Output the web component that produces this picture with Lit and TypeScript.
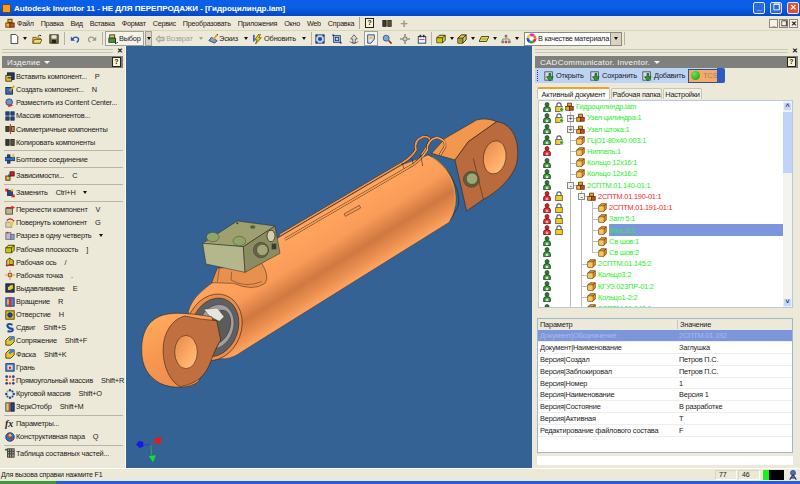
import { LitElement, html, css, svg } from "lit";
import { customElement } from "lit/decorators.js";

const r = (x: number, y: number, w: number, h: number, f: string, s = "none") =>
  svg`<rect x=${x} y=${y} width=${w} height=${h} fill=${f} stroke=${s} stroke-width="1"/>`;
const c = (x: number, y: number, rad: number, f: string, s = "none") =>
  svg`<circle cx=${x} cy=${y} r=${rad} fill=${f} stroke=${s} stroke-width=".8"/>`;
const p = (d: string, f: string, s = "none", w = 1) =>
  svg`<path d=${d} fill=${f} stroke=${s} stroke-width=${w}/>`;

const DK = "#23304a";
const icons: Record<string, any> = {
  asm: svg`${r(3.5, 1.5, 5, 4, "#e8a828", "#5a2c00")}${r(1, 6, 5, 5, "#f0b030", "#5a2c00")}${r(6, 6, 5, 5, "#c8482a", "#5a2c00")}`,
  part: svg`${p("M1 4 L4 1 H11 V8 L8 11 H1 Z", "#e0a030", "#6a3a08")}${p("M1 4 H8 V11 M8 4 L11 1", "none", "#6a3a08")}${r(1.5, 4.5, 6, 6, "#f4c860")}`,
  person: svg`${c(6, 3, 2.4, "#2c7a2c", "#183a18")}${p("M2 11.5 V8 Q2 5.5 6 5.5 Q10 5.5 10 8 V11.5 Z", "#3d9a3d", "#183a18")}${r(4.5, 8, 3, 3, "#c9e8c9")}`,
  personr: svg`${c(6, 3, 2.4, "#d02020", "#601010")}${p("M2 11.5 V8 Q2 5.5 6 5.5 Q10 5.5 10 8 V11.5 Z", "#e03030", "#601010")}${r(4.5, 8, 3, 3, "#f4b0b0")}`,
  lock: svg`${p("M3.5 6 V3.5 Q3.5 1 6 1 Q8.5 1 8.5 3.5 V6", "none", "#4a5a90", 1.4)}${r(2, 5.5, 8, 6, "#f2cc1e", "#6a6030")}`,
  lockc: svg`${p("M3.5 6 V3.5 Q3.5 1 6 1 Q8.5 1 8.5 3.5 V6", "none", "#4a5a90", 1.4)}${r(2, 5.5, 8, 6, "#f2cc1e", "#6a6030")}${c(9, 9, 2.4, "#2aa82a", "#fff")}`,
  new: svg`${p("M2.5 .5 H8 L10.5 3 V11.5 H2.5 Z", "#fff", "#222")}`,
  open: svg`${p("M1 4 H5 L6 5 H10 V11 H1 Z", "#e8c040", "#6a5010")}${p("M1 11 L3 6.5 H12 L10 11 Z", "#f4dc78", "#6a5010")}${p("M7 3 Q9 .5 11 2", "none", "#222", 1.2)}`,
  save: svg`${r(1, 1, 10, 10, "#7a7a3a", "#222")}${r(3, 1.5, 6, 4, "#e8e8e0")}${r(3.5, 7, 5, 4, "#222")}`,
  undo: svg`${p("M3 6 Q6 2 10 5 Q11 8 8 10", "none", "#2a50b0", 1.6)}${p("M1 3 V8 H6 Z", "#2a50b0")}`,
  redo: svg`${p("M9 6 Q6 2 2 5 Q1 8 4 10", "none", "#9a9a90", 1.4)}${p("M11 3 V8 H6 Z", "#9a9a90")}`,
  select: svg`${r(2, 1, 6, 4, "#e0c040", "#333")}${r(1, 5, 8, 5, "#3a9a3a", "#333")}${p("M9 6 L9 12 L11 10 L13 11", "none", "#222")}`,
  back: svg`${p("M1 6 L5 2 V4 H11 V8 H5 V10 Z", "#d0cec0", "#9a988c")}`,
  sketch: svg`${p("M1 8 L4 4 L11 8 L8 11 Z", "#6a9ad8", "#2a4a90")}${p("M5 8 L11 1", "none", "#d8a020", 2)}${p("M11 1 L12 0", "none", "#c02020", 2)}`,
  update: svg`${p("M7 0 L2 7 H5 L3 12 L10 4.5 H7 L9 0 Z", "#e8d020", "#6a5a10")}${r(0, 1, 2, 8, "#3060c0")}`,
  zall: svg`${r(1, 1, 10, 10, "#c8d8ec", "#1a3a70")}${c(6, 6, 2.5, "#1a4a98")}${c(2, 2, 1.2, "#1a3a70")}${c(10, 2, 1.2, "#1a3a70")}${c(2, 10, 1.2, "#1a3a70")}${c(10, 10, 1.2, "#1a3a70")}`,
  zwin: svg`${r(2, 2, 8, 8, "#b8cce4", "#1a3a70")}${r(4, 4, 4, 4, "none", "#1a3a70")}${r(0.5, 0.5, 2, 2, "#1a3a70")}${r(9.5, 9.5, 2, 2, "#1a3a70")}`,
  zup: svg`${p("M6 1 L10 6 H7.5 V11 H4.5 V6 H2 Z", "#e4e2d6", "#555")}${p("M1 9 Q6 13 11 9", "none", "#555")}`,
  pan: svg`${p("M2 1 H10 V6 L6 11 H2 Z", "#d8e4f4", "#1a3a70")}${r(4, 3, 4, 3, "#f0c040")}`,
  zoom: svg`${c(5, 5, 3.6, "#7ca8e0", "#1a3a70")}${p("M8 8 L11.5 11.5", "none", "#a03020", 2)}`,
  orbit: svg`${c(6, 6, 2.6, "#cfcdbf", "#444")}${p("M6 0 V3 M6 9 V12 M0 6 H3 M9 6 H12", "none", "#444")}`,
  look: svg`${r(1.5, 3, 9, 8, "#eef2fa", "#1a2a60")}${r(3, 1, 2, 3, "#1a2a60")}${r(7, 1, 2, 3, "#1a2a60")}${r(3, 6, 6, 1, "#d03030")}`,
  box1: svg`${p("M1 4.5 L4 1.5 H11 V7.5 L8 10.5 H1 Z", "#e4e020", "#222")}${r(1.5, 5, 6, 5, "#c8c800")}${p("M1 4.5 H8 V10.5 M8 4.5 L11 1.5", "none", "#222")}`,
  box2: svg`${p("M1 5 L5 1 H11 V7 L7 11 H1 Z", "#d8c850", "#222")}${r(1.5, 5.5, 5, 5, "#a8a020")}${p("M1 5 H7 V11 M7 5 L11 1", "none", "#222")}`,
  plane: svg`${p("M3 3 H12 L9 9 H0 Z", "#e4dc30", "#333")}${p("M3 6 H9", "none", "#888")}`,
  tree: svg`${r(4.5, 1, 3, 3, "#777")}${r(0.5, 8, 3, 3, "#777")}${r(4.5, 8, 3, 3, "#d04020")}${r(8.5, 8, 3, 3, "#777")}${p("M6 4 V6 M2 8 V6 H10 V8", "none", "#777")}`,
  ins: svg`${r(3, 1, 8, 8, "#1a3a80", "#101830")}${r(1, 4, 7, 7, "#e8c030", "#403000")}${p("M3 7 H9", "none", "#103070", 1.4)}`,
  create: svg`${r(1, 3, 8, 8, "#2a70d0", "#102040")}${p("M5 8 L11 1", "none", "#d8a020", 2)}${p("M4.5 9 L6 7.5", "none", "#c02020", 1.6)}`,
  place: svg`${c(5, 5, 4, "#7090c8", "#203050")}${p("M4 7 L10 9 L4 11 Z", "#d03030")}`,
  arr: svg`${r(1, 1, 4, 4, "#1a4a98", DK)}${r(7, 1, 4, 4, "#1a4a98", DK)}${r(1, 7, 4, 4, "#1a4a98", DK)}${r(7, 7, 4, 4, "#1a4a98", DK)}`,
  mir: svg`${r(1, 3, 4, 6, "#444a30", "#222")}${r(8, 3, 3, 6, "#c8a030", "#222")}${p("M6.5 0 V12", "none", "#d02020", 1.2)}`,
  cp: svg`${r(1, 3, 4, 7, "#3a3a30", "#222")}${r(7, 3, 4, 7, "#5a5a30", "#222")}`,
  bolt: svg`${r(3, 1, 3, 10, "#1a4a98", DK)}${r(0, 4, 12, 4, "#2a70d0", DK)}${r(9, 0, 2, 4, "#e0c030")}`,
  con: svg`${r(1, 6, 5, 5, "#e8c030", "#402000")}${r(6, 1, 5, 5, "#d02020", "#501010")}${r(4, 4, 3, 3, "#1a4a98")}`,
  rep: svg`${r(3, 3, 6, 6, "#1a4a98", DK)}${p("M0 1 L5 1 L1 5 Z", "#e02020")}${p("M12 11 L7 11 L11 7 Z", "#e02020")}${r(7, 1, 3, 3, "#e8c030")}`,
  mov: svg`${r(1, 4, 8, 7, "#b8b88c", "#444")}${p("M1 2.5 H8 V0.5 L12 3 L8 5.5 V3.5 H1 Z", "#e02020")}`,
  rot: svg`${r(1, 5, 7, 6, "#d8d4b0", "#888")}${c(8, 7, 2.5, "#e8d030")}${p("M2 3 Q7 -1 11 4", "none", "#e02020", 1.6)}`,
  sec: svg`${r(1, 2, 6, 8, "#c0b8d0", "#667")}${r(7, 4, 4, 6, "#88a0c8", "#667")}${r(2, 1, 2, 2, "#c03030")}`,
  axis: svg`${p("M2 4 L6 1 V9 L2 11 Z", "#e4cc20", "#333")}${p("M1 10 H11", "none", "#c02020", 1.4)}${p("M6 2 L10 4 V9 L6 9", "#d8b818", "#333")}`,
  pt: svg`${p("M6 0 V12 M0 6 H12", "none", "#e09040", 1.2)}${r(4, 4, 4, 4, "#e8b060", "#a05020")}`,
  ext: svg`${r(1, 1, 10, 10, "#1a3a90", "#101830")}${p("M3 5 L7 2 H10 V7 L6 9 H3 Z", "#e8d030", "#403000")}`,
  rev: svg`${r(1, 1, 10, 10, "#5080d0", "#203060")}${r(4.5, 0, 3, 12, "#d03030")}${r(2.5, 3, 2, 6, "#e0c050")}`,
  hole: svg`${r(1, 1, 10, 10, "#e0c020", "#403000")}${c(6, 6, 2.8, "#1a4a98", "#101830")}`,
  swp: svg`${p("M9 2 Q2 0 3 4 Q5 7 9 7 Q11 11 3 10", "none", "#1a4aa8", 2.4)}`,
  fil: svg`${p("M1 5 L5 1 H11 V7 L7 11 H1 Z", "#e8c828", "#403000")}${p("M5 5 L11 1", "none", "#3a80e0", 3)}`,
  face: svg`${r(1, 2, 10, 9, "#4a90e0", "#103060")}${r(3, 4, 6, 5, "#f0e8d0")}${c(6, 7, 1.5, "#e02020")}`,
  rec: svg`${c(2, 2, 1.6, "#1a4a98")}${c(10, 2, 1.6, "#1a4a98")}${c(2, 10, 1.6, "#1a4a98")}${c(10, 10, 1.6, "#1a4a98")}${c(2, 6, 1.4, "#d04020")}${c(10, 6, 1.4, "#d04020")}${c(6, 2, 1.4, "#d04020")}${c(6, 10, 1.4, "#d04020")}`,
  cir: svg`${c(6, 1.5, 1.5, "#1a4a98")}${c(6, 10.5, 1.5, "#1a4a98")}${c(1.5, 6, 1.5, "#1a4a98")}${c(10.5, 6, 1.5, "#1a4a98")}${c(3, 3, 1.3, "#e0a030")}${c(9, 3, 1.3, "#1a4a98")}${c(3, 9, 1.3, "#1a4a98")}${c(9, 9, 1.3, "#1a4a98")}`,
  mirf: svg`${r(1, 1, 4, 10, "#e8d030", "#1a3a90")}${r(7, 1, 4, 10, "#1a4a98", "#101830")}${p("M6 0 V12", "none", "#e02020", 1.2)}`,
  imate: svg`${c(6, 6, 5.2, "#2a70d0", "#102040")}${p("M3 3 L9 9", "none", "#e02020", 2.2)}${c(6, 4, 1.8, "#e8c030")}`,
  tab: svg`${r(3, 1, 8, 10, "#a8a890", "#333")}${p("M5.5 1 V11 M8 1 V11 M3 4 H11 M3 7 H11", "none", "#333")}${r(0, 1, 3, 2, "#2a6a2a")}`,
  dn: svg`${r(1, 1, 9, 10, "#d8dce4", "#404860")}${p("M6 3 V7 H3 L7 12 L11 7 H8 V3 Z", "#30a030", "#106010")}`,
  wheel: svg`<circle cx="6" cy="6" r="4" fill="none" stroke="#e03030" stroke-width="3" stroke-dasharray="4.2 25"/><circle cx="6" cy="6" r="4" fill="none" stroke="#20b040" stroke-width="3" stroke-dasharray="4.2 25" stroke-dashoffset="-4.2"/><circle cx="6" cy="6" r="4" fill="none" stroke="#2050e0" stroke-width="3" stroke-dasharray="4.2 25" stroke-dashoffset="-8.4"/><circle cx="6" cy="6" r="4" fill="none" stroke="#f0d020" stroke-width="3" stroke-dasharray="4.2 25" stroke-dashoffset="-12.6"/><circle cx="6" cy="6" r="4" fill="none" stroke="#e020e0" stroke-width="3" stroke-dasharray="4.2 25" stroke-dashoffset="-16.8"/><circle cx="6" cy="6" r="4" fill="none" stroke="#f08020" stroke-width="3" stroke-dasharray="4.2 25" stroke-dashoffset="-21"/>`,
  net: svg`${c(6, 3.5, 3, "#4a70c8", "#1c3070")}${p("M2 11.5 L6 6 L10 11.5 M3 9.5 H9", "none", "#1c3070", 1.5)}`,
};
const ic = (n: string, cls = "ic") => html`<svg class=${cls} viewBox="0 0 12 12">${icons[n]}</svg>`;

const menu = ["Файл", "Правка", "Вид", "Вставка", "Формат", "Сервис", "Преобразовать", "Приложения", "Окно", "Web", "Справка"];

type TB = { i?: string; t?: string; w: number; k?: string };
const tools: TB[] = [
  { w: 7 }, { i: "new", w: 13 }, { k: "arrow", w: 10 }, { i: "open", w: 14 }, { i: "save", w: 20 }, { k: "sep", w: 1 },
  { i: "undo", w: 20 }, { i: "redo", w: 14 }, { k: "sep", w: 6 },
  { i: "select", t: "Выбор", w: 39, k: "press" }, { w: 1 }, { k: "drop", w: 7 }, { w: 3 },
  { i: "back", t: "Возврат", w: 38, k: "off" }, { k: "arrowoff", w: 15 },
  { i: "sketch", t: "Эскиз", w: 30 }, { k: "arrow", w: 15 },
  { i: "update", t: "Обновить", w: 43 }, { k: "arrow", w: 15 }, { k: "sep", w: 1 },
  { i: "zall", w: 16 }, { i: "zwin", w: 18 }, { i: "zup", w: 16 }, { w: 2 }, { i: "pan", w: 14, k: "pressi" }, { i: "zoom", w: 18 },
  { i: "orbit", w: 18 }, { i: "look", w: 16 }, { k: "sep", w: 3 },
  { i: "box1", w: 16 }, { k: "arrow", w: 6 }, { i: "box2", w: 14 }, { k: "arrow", w: 7 }, { i: "plane", w: 15 }, { k: "arrow", w: 7 }, { i: "tree", w: 16 }, { k: "arrow", w: 6 },
];

type Cmd = { i?: string; t?: string; key?: string; more?: boolean; sep?: boolean; fx?: boolean };
const cmds: Cmd[] = [
  { i: "ins", t: "Вставить компонент...", key: "P" },
  { i: "create", t: "Создать компонент...", key: "N" },
  { i: "place", t: "Разместить из Content Center..." },
  { i: "arr", t: "Массив компонентов..." },
  { i: "mir", t: "Симметричные компоненты" },
  { i: "cp", t: "Копировать компоненты" },
  { sep: true },
  { i: "bolt", t: "Болтовое соединение" },
  { sep: true },
  { i: "con", t: "Зависимости...", key: "C" },
  { sep: true },
  { i: "rep", t: "Заменить", key: "Ctrl+H", more: true },
  { sep: true },
  { i: "mov", t: "Перенести компонент", key: "V" },
  { i: "rot", t: "Повернуть компонент", key: "G" },
  { i: "sec", t: "Разрез в одну четверть", more: true },
  { i: "box1", t: "Рабочая плоскость", key: "]" },
  { i: "axis", t: "Рабочая ось", key: "/" },
  { i: "pt", t: "Рабочая точка", key: "." },
  { i: "ext", t: "Выдавливание", key: "E" },
  { i: "rev", t: "Вращение", key: "R" },
  { i: "hole", t: "Отверстие", key: "H" },
  { i: "swp", t: "Сдвиг", key: "Shift+S" },
  { i: "fil", t: "Сопряжение", key: "Shift+F" },
  { i: "fil", t: "Фаска", key: "Shift+K" },
  { i: "face", t: "Грань" },
  { i: "rec", t: "Прямоугольный массив", key: "Shift+R" },
  { i: "cir", t: "Круговой массив", key: "Shift+O" },
  { i: "mirf", t: "ЗеркОтобр", key: "Shift+M" },
  { sep: true },
  { fx: true, t: "Параметры..." },
  { i: "imate", t: "Конструктивная пара", key: "Q" },
  { sep: true },
  { i: "tab", t: "Таблица составных частей..." },
];

type Node = { n: string; g: string; box?: string; ic: string; red?: boolean; pr?: boolean; lock?: string; sel?: boolean };
const nodes: Node[] = [
  { n: "Гидроцилиндр.iam", g: "", ic: "asm", lock: "lockc" },
  { n: "Узел цилиндра:1", g: "t", box: "+", ic: "asm", lock: "lockc" },
  { n: "Узел штока:1", g: "t", box: "+", ic: "asm" },
  { n: "ГЦО1-80х40.003:1", g: "t", ic: "part", lock: "lockc" },
  { n: "Ниппель:1", g: "t", ic: "part", pr: true },
  { n: "Кольцо 12х16:1", g: "t", ic: "part" },
  { n: "Кольцо 12х16:2", g: "t", ic: "part" },
  { n: "2СПТМ.01.140-01:1", g: "t", box: "-", ic: "asm" },
  { n: "2СПТМ.01.190-01:1", g: "vt", box: "-", ic: "asm", red: true, pr: true, lock: "lock" },
  { n: "2СПТМ.01.191-01:1", g: "vvt", ic: "part", red: true, pr: true, lock: "lock" },
  { n: "Загл 5:1", g: "vvt", ic: "part", pr: true, lock: "lock" },
  { n: "Загл 5:2", g: "vvt", ic: "part", pr: true, lock: "lock", sel: true },
  { n: "Св шов:1", g: "vvt", ic: "part" },
  { n: "Св шов:2", g: "vvl", ic: "part" },
  { n: "2СПТМ.01.145:2", g: "vt", ic: "part" },
  { n: "Кольцо3:2", g: "vt", ic: "part" },
  { n: "КГУЗ.023ПР-01:2", g: "vt", ic: "part" },
  { n: "Кольцо1-2:2", g: "vt", ic: "part" },
  { n: "2СПТМ.01.140:1", g: "vt", ic: "part" },
];

const params: [string, string][] = [
  ["Документ|Обозначение", "2СПТМ.01.192"],
  ["Документ|Наименование", "Заглушка"],
  ["Версия|Создал", "Петров П.С."],
  ["Версия|Заблокировал", "Петров П.С."],
  ["Версия|Номер", "1"],
  ["Версия|Наименование", "Версия 1"],
  ["Версия|Состояние", "В разработке"],
  ["Версия|Активная", "T"],
  ["Редактирование файлового состава", "F"],
];

const rbtns: [string, number][] = [["Открыть", 46], ["Сохранить", 52], ["Добавить", 46]];

const L = "#2b1a0c";
const model = svg`
<defs>
  <linearGradient id="barrel" gradientUnits="userSpaceOnUse" x1="600" y1="335" x2="714" y2="518">
    <stop offset="0" stop-color="#ffa560"/><stop offset=".38" stop-color="#fa9c59"/>
    <stop offset=".66" stop-color="#cf7840"/><stop offset=".88" stop-color="#ef9352"/><stop offset="1" stop-color="#ffa460"/>
  </linearGradient>
  <linearGradient id="hole" x1="0" y1="0" x2="1" y2="1">
    <stop offset="0" stop-color="#e08a4c"/><stop offset=".6" stop-color="#ffab66"/><stop offset="1" stop-color="#ffc488"/>
  </linearGradient>
  <linearGradient id="eye" x1="0" y1="0" x2=".6" y2="1">
    <stop offset="0" stop-color="#ffb060"/><stop offset=".5" stop-color="#f89850"/><stop offset="1" stop-color="#e88c4e"/>
  </linearGradient>
</defs>
<!-- first pipe, behind the barrel -->
<path d="M450 405 L815 190 Q845 172 858 150 Q850 122 880 110 Q905 108 898 130 L875 165" fill="none" stroke=${L} stroke-width="7.5"/>
<path d="M450 405 L815 190 Q845 172 858 150 Q850 122 880 110 Q905 108 898 130 L875 165" fill="none" stroke="#f0964f" stroke-width="5.5"/>
<!-- right rod end, back -->
<path d="M905 160 L945 115 L1040 60 Q1070 52 1100 65 L1015 125 L975 180 Z" fill="#f3974f" stroke=${L} stroke-width="1.6"/>
<!-- barrel -->
<path d="M175 635 C185 600 205 580 245 550 L450 410 L815 195 L895 165 C960 190 1005 280 960 365 L335 755 C300 782 262 780 245 768 Z" fill="url(#barrel)" stroke=${L} stroke-width="1"/>
<!-- second pipe, on top -->
<path d="M465 418 L830 205 Q870 185 892 150 Q890 120 920 112 Q950 120 945 140 L930 165" fill="none" stroke=${L} stroke-width="7.5"/>
<path d="M465 418 L830 205 Q870 185 892 150 Q890 120 920 112 Q950 120 945 140 L930 165" fill="none" stroke="#f59b55" stroke-width="5.5"/>
<path d="M895 165 C945 190 995 260 985 318 L958 365" fill="none" stroke=${L} stroke-width="1.6"/>
<path d="M905 170 C950 200 980 250 975 320" fill="none" stroke="#f0e040" stroke-width="1"/>
<path d="M816 188 L822 206 M845 175 L850 192 M872 165 L878 198" stroke=${L} stroke-width="1.6"/>
<path d="M642 342 L688 316 L692 324 L646 349 Z" fill="#f09a58" stroke=${L} stroke-width="1.4"/>
<!-- right rod end, face -->
<path d="M1015 125 L1100 65 C1150 70 1172 130 1160 190 C1150 232 1100 278 1060 298 L1010 333 L975 180 Z" fill="#b96b3e" stroke=${L} stroke-width="1.6"/>
<path d="M1030 175 L1060 298" fill="none" stroke=${L} stroke-width="1.4"/>
<ellipse cx="1094" cy="172" rx="34" ry="50" fill="url(#hole)" stroke=${L} stroke-width="1.6" transform="rotate(8 1094 172)"/>
<circle cx="1024" cy="238" r="24" fill="#5a5f42" stroke=${L}/>
<circle cx="1026" cy="236" r="17" fill="#9fa678" stroke=${L}/>
<!-- gland -->
<ellipse cx="252" cy="682" rx="82" ry="102" fill="#e98c4c" stroke=${L} stroke-width="1.6" transform="rotate(20 252 682)"/>
<ellipse cx="254" cy="682" rx="70" ry="90" fill="#5d6166" stroke=${L} stroke-width="1.4" transform="rotate(20 254 682)"/>
<ellipse cx="258" cy="680" rx="52" ry="68" fill="#a0a0a0" stroke=${L} transform="rotate(20 258 680)"/>
<ellipse cx="266" cy="680" rx="34" ry="52" fill="#5b5b58" stroke=${L} transform="rotate(20 266 680)"/>
<path d="M222 628 L262 624 L282 650 L268 664 L240 650 Z" fill="#e4e4e0" stroke=${L}/>
<!-- left rod end -->
<path d="M35 750 C35 690 60 650 115 642 Q150 635 245 650 L272 720 L205 845 C180 865 130 868 90 850 C55 830 35 800 35 750 Z" fill="url(#eye)" stroke=${L} stroke-width="1.6"/>
<path d="M165 648 Q215 660 260 662 L272 720 Q258 740 240 790 C225 825 205 850 150 860 C105 835 90 760 105 710 C118 670 145 652 165 648 Z" fill="#bf6f40" stroke=${L} stroke-width="1.6"/>
<ellipse cx="168" cy="756" rx="34" ry="50" fill="url(#hole)" stroke=${L} stroke-width="1.6"/>
<!-- neck -->
<path d="M245 548 L262 505 L395 490 Q420 530 405 550 Q370 575 310 550 Z" fill="#e8914f" stroke=${L} stroke-width="1.4"/>
<path d="M268 505 L262 545 M305 515 L303 540 Q345 565 395 545" fill="none" stroke=${L} stroke-width="1.2"/>
<path d="M392 490 L445 458" stroke="#f0e040" stroke-width="1.2"/>
<!-- valve block -->
<path d="M218 430 L322 363 L435 378 L340 440 Z" fill="#9ea070" stroke=${L} stroke-width="1.4"/>
<path d="M218 430 L340 440 L345 517 L228 492 Z" fill="#b3b78b" stroke=${L} stroke-width="1.4"/>
<path d="M340 440 L435 378 L450 460 L345 517 Z" fill="#8a8c62" stroke=${L} stroke-width="1.4"/>
<circle cx="393" cy="450" r="23" fill="#64654a" stroke=${L}/>
<circle cx="397" cy="450" r="17" fill="#a3a578" stroke=${L}/>
<ellipse cx="423" cy="408" rx="12" ry="17" fill="#d0d0b0" stroke=${L} stroke-width="2"/>
<rect x="425" y="431" width="14" height="17" fill="#3a3a30"/>
<ellipse cx="248" cy="411" rx="19" ry="14" fill="#8ea468" stroke=${L}/>
<ellipse cx="328" cy="423" rx="19" ry="14" fill="#8ea468" stroke=${L}/>
<ellipse cx="368" cy="381" rx="8" ry="5" fill="#5a5a40"/>
<circle cx="322" cy="370" r="3" fill="#3a3a30"/>
<!-- triad -->
<path d="M62 1035 L40 1034" stroke="#2030e0" stroke-width="2.4"/>
<path d="M62 1035 L80 1025" stroke="#e02020" stroke-width="2.4"/>
<path d="M62 1035 L65 1065" stroke="#20c040" stroke-width="2.4"/>
<path d="M18 1033 L28 1022 L40 1026 L40 1040 L28 1044 Z" fill="#1818e8"/>
<path d="M74 1014 L95 1012 L92 1028 L84 1033 L76 1026 Z" fill="#e81818"/>
<path d="M56 1068 L78 1066 L69 1087 Z" fill="#10e030"/>
`;

@customElement("app-root")
export class AppRoot extends LitElement {
  static styles = css`
    :host { display: flex; flex-direction: column; width: 800px; height: 484px; overflow: hidden; background: #ece9d8;
      font-family: "Liberation Sans", Arial, sans-serif; font-size: 7.4px; letter-spacing: -.2px; color: #1c1c1c; }
    svg { display: block; flex: none; }
    .ic { width: 10px; height: 10px; }
    .titlebar { height: 16px; flex: none; display: flex; align-items: center; padding: 0 1px 0 2px; gap: 2px;
      background: linear-gradient(#0a5fe8 0, #0b5fe6 45%, #0754d8 70%, #0448c8 100%); color: #fff; }
    .appic { width: 9px; height: 9px; background: #f0a020; border: 1px solid #804010; box-sizing: border-box; }
    .title { flex: 1; font-size: 8px; font-weight: 700; margin-left: 1px; white-space: pre; letter-spacing: 0; }
    .wb { width: 12px; height: 12px; margin-left: 3px; border: 1px solid #dfe8ff; border-radius: 2px; box-sizing: border-box; background: #2c68e0;
      display: flex; align-items: center; justify-content: center; color: #fff; font-size: 8px; font-weight: 700; line-height: 1; }
    .wb.close { background: #e0502a; }
    .menubar { height: 15px; flex: none; display: flex; align-items: center; padding-left: 5px; border-bottom: 1px solid #d8d4c0; box-sizing: border-box; font-size: 7.2px; letter-spacing: -.25px; }
    .mitem { margin-right: 7px; white-space: pre; }
    .mlogo { margin-right: 2px; }
    .vsep { width: 1px; height: 12px; background: #a8a694; margin: 0 5px 0 -2px; }
    .mgap { width: 8px; }
    .plus { font-size: 13px; color: #9a9a90; font-weight: 700; margin-left: 8px; line-height: 1; }
    .mdi { margin-left: auto; display: flex; gap: 1px; padding-right: 2px; }
    .mdib { width: 9px; height: 9px; background: #f4f2e8; border: 1px solid #8a8878; box-sizing: border-box; font-size: 7px; line-height: 7px; text-align: center; font-weight: 700; color: #111; }
    .toolbar { height: 15px; flex: none; display: flex; align-items: center; }
    .tbi { display: flex; align-items: center; justify-content: center; height: 15px; flex: none; box-sizing: border-box; gap: 1px; white-space: pre; }
    .tbi.press { background: #f6f4ea; border: 1px solid #a0a0a0; justify-content: flex-start; padding-left: 2px; }
    .tbi.pressi { background: #f6f4ea; border: 1px solid #a0a0a0; }
    .tbi.off { color: #a4a298; }
    .tbi.drop { background: #d8d4c2; border: 1px solid #a0a0a0; }
    .tri { width: 0; height: 0; border: 2px solid transparent; border-top: 3px solid #111; border-bottom: 0; }
    .tri.off { border-top-color: #a4a298; }
    .sepl { width: 1px; height: 13px; background: #b4b2a2; flex: none; }
    .combo { margin-left: 4px; width: 98px; height: 14px; border: 1px solid #8a8a80; background: #fff; box-sizing: border-box; display: flex; align-items: center; padding-left: 1px; }
    .combo span { flex: 1; white-space: pre; letter-spacing: -.28px; }
    .combodd { width: 10px; height: 12px; background: #d8d4c2; display: flex; align-items: center; justify-content: center; border-left: 1px solid #8a8a80; flex: none; }
    .wheel { width: 11px; height: 11px; margin-right: 1px; }
    .aftercombo { margin-left: 2px; }
    .main { flex: 1; min-height: 0; display: flex; }
    .left { width: 126px; flex: none; box-sizing: border-box; border-right: 1px solid #fff; padding: 1px 2px 0 2px; display: flex; flex-direction: column; }
    .grip { height: 7px; flex: none; display: flex; align-items: center; gap: 4px; }
    .grip i { flex: 1; height: 2px; border-top: 1px solid #c8c6b6; border-bottom: 1px solid #c8c6b6; }
    .grip b { font-size: 7px; line-height: 1; color: #111; }
    .phead { height: 12px; flex: none; margin-top: 2px; background: #7f7f7c; color: #f4f4f0; display: flex; align-items: center; padding: 0 2px 0 5px; font-size: 8px; letter-spacing: .25px; white-space: pre; }
    .phead .caret { width: 0; height: 0; margin-left: 4px; border: 3px solid transparent; border-top: 3px solid #f4f4f0; border-bottom: 0; }
    .help { margin-left: auto; width: 9px; height: 10px; background: #f8f4d0; border: 1px solid #222; box-sizing: border-box; font-size: 7px; line-height: 8px; text-align: center; font-weight: 700; color: #222; letter-spacing: 0; flex: none; }
    .menubar .help { margin-left: 0; }
    .cmds { padding: 2px 0 0 3px; display: flex; flex-direction: column; }
    .cmd { height: 13.15px; flex: none; display: flex; align-items: center; white-space: pre; }
    .cmd .ic { margin-right: 1px; }
    .cmd .key { margin-left: 8px; }
    .cmd .tri { margin-left: 7px; }
    .csep { height: 3.7px; flex: none; display: flex; align-items: center; margin-left: -1px; }
    .csep i { flex: 1; height: 1px; background: #b8b6a6; }
    .fx { width: 10px; margin-right: 1px; font-family: "Liberation Serif", serif; font-style: italic; font-weight: 700; font-size: 10px; line-height: 10px; }
    .canvas { flex: 1; min-width: 0; background: #346294; }
    .canvas svg { width: 100%; height: 100%; }
    .right { width: 268px; flex: none; box-sizing: border-box; padding: 1px 2px 0 3px; display: flex; flex-direction: column; }
    .rtb { height: 15px; flex: none; display: flex; align-items: center; margin-right: 73px; background: #bcd3f4; padding-left: 2px; position: relative; }
    .dots { width: 1px; height: 11px; margin-right: 5px; border-left: 1px dotted #1a3a90; }
    .rbtn { display: flex; align-items: center; gap: 2px; white-space: pre; flex: none; }
    .tcs { width: 30px; height: 14px; box-sizing: border-box; background: #f8a868; border: 1px solid #30508c; display: flex; align-items: center; gap: 3px; padding-left: 2px; color: #8a8a80; }
    .ball { width: 9px; height: 9px; border-radius: 50%; flex: none; background: radial-gradient(circle at 35% 30%, #70e050, #10a010); }
    .chev { position: absolute; right: 0; top: 0; width: 8px; height: 15px; background: #2c5cc0; border-radius: 0 2px 2px 0; }
    .tabs { height: 14px; flex: none; margin-top: 2px; padding-left: 2px; display: flex; align-items: flex-end; gap: 1px; }
    .tab { height: 11px; box-sizing: border-box; border: 1px solid #c8c6b6; border-bottom: 0; background: #f2f0e4; display: flex; align-items: center; justify-content: center; border-radius: 2px 2px 0 0; width: 39px; white-space: pre; }
    .tab.mid { width: 51px; }
    .tab.on { height: 12px; width: 73px; background: #fcfcf8; border-top: 2px solid #f0a030; }
    .tree { height: 208px; flex: none; margin: 1px 5px 0 3px; background: #fff; overflow: hidden; display: flex; border: 1px solid #b8c8d8; box-sizing: border-box; }
    .tlist { flex: 1; min-width: 0; }
    .row { height: 11.23px; display: flex; align-items: center; padding-left: 3px; white-space: pre; overflow: hidden; }
    .st { width: 11.5px; flex: none; display: flex; justify-content: flex-start; }
    .st .ic { width: 10px; height: 10px; }
    .g { width: 11px; height: 12px; flex: none; position: relative; }
    .g.v::before, .g.t::before, .g.l::before { content: ""; position: absolute; left: 5px; top: 0; width: 1px; height: 100%; background: #bcbcb4; }
    .g.l::before { height: 50%; }
    .g.t::after, .g.l::after { content: ""; position: absolute; left: 5px; top: 6px; width: 6px; height: 1px; background: #bcbcb4; }
    .ebox { position: absolute; left: 2px; top: 3px; width: 7px; height: 7px; z-index: 1; box-sizing: border-box; border: 1px solid #8a8a84; background: #f0f0ec; color: #222; font-size: 7px; line-height: 5px; text-align: center; }
    .row .nic { width: 9px; height: 9px; margin-right: 2px; flex: none; }
    .nm { flex: 1; color: #28f028; height: 100%; display: flex; align-items: center; }
    .nm.red { color: #f82828; }
    .nm.sel { background: #7c96de; }
    .sb { width: 9px; flex: none; background: #f4f3ee; display: flex; flex-direction: column; padding-top: 1px; }
    .sbb { height: 9px; flex: none; background: #c8d8f8; border: 1px solid #e8f0ff; box-sizing: border-box; color: #1a3a80; font-size: 7px; line-height: 6px; text-align: center; font-weight: 700; }
    .thumb { height: 61px; flex: none; margin-top: 1px; background: #c2d3f9; }
    .sb .grow { flex: 1; }
    .split { height: 10px; flex: none; }
    .tbl { height: 135px; flex: none; margin: 0 5px 0 2px; background: #fff; border: 1px solid #9cb8cc; box-sizing: border-box; display: flex; flex-direction: column; }
    .tr { display: grid; grid-template-columns: 139px 1fr; height: 11.9px; flex: none; border-bottom: 1px solid #eeeeea; box-sizing: border-box; align-items: center; white-space: pre; }
    .tr span { padding-left: 2px; overflow: hidden; }
    .tr.head { height: 11px; background: #ece9d8; border-bottom: 0; }
    .tr.head span + span { border-left: 1px solid #c8c6b6; }
    .tr.sel { background: #7c96de; color: #a9bae6; }
    .note { height: 9px; flex: none; margin: 3px 5px 0 2px; background: #fff; }
    .status { height: 13px; flex: none; display: flex; align-items: center; padding-left: 1px; border-top: 1px solid #fff; box-sizing: border-box; font-size: 7.1px; }
    .status .msg { flex: 1; white-space: pre; }
    .cell { width: 22px; height: 10px; margin-right: 1px; border: 1px solid #d8d4c0; border-bottom-color: #fff; border-right-color: #fff; box-sizing: border-box; padding-left: 3px; display: flex; align-items: center; }
    .lg { width: 6px; height: 10px; background: #18f018; margin-left: 2px; }
    .lb { width: 15px; height: 10px; background: #000; margin-right: 4px; }
    .net { margin-right: 2px; }
    .taskbar { height: 3px; flex: none; display: flex; background: #245edb; }
    .start { width: 56px; background: #3c9a3c; }
  `;

  renderTool(t: TB) {
    if (t.k === "sep") return html`<div class="tbi" style="width:${t.w}px"><div class="sepl"></div></div>`;
    if (t.k === "arrow" || t.k === "arrowoff" || t.k === "drop")
      return html`<div class="tbi ${t.k === "drop" ? "drop" : ""}" style="width:${t.w}px"><div class="tri ${t.k === "arrowoff" ? "off" : ""}"></div></div>`;
    if (!t.i) return html`<div class="tbi" style="width:${t.w}px"></div>`;
    return html`<div class="tbi ${t.k ?? ""}" style="width:${t.w}px">${ic(t.i)}${t.t ? html`<span>${t.t}</span>` : ""}</div>`;
  }

  renderCmd(m: Cmd) {
    if (m.sep) return html`<div class="csep"><i></i></div>`;
    return html`<div class="cmd">
      ${m.fx ? html`<span class="fx">fx</span>` : ic(m.i!)}<span>${m.t}</span>
      ${m.key ? html`<span class="key">${m.key}</span>` : ""}
      ${m.more ? html`<span class="tri"></span>` : ""}
    </div>`;
  }

  renderNode(n: Node) {
    const cells = n.g.split("");
    return html`<div class="row">
      <div class="st">${ic(n.pr ? "personr" : "person")}</div>
      <div class="st">${n.lock ? ic(n.lock) : ""}</div>
      ${cells.map((g, i) => html`<div class="g ${g}">${n.box && i === cells.length - 1 ? html`<div class="ebox">${n.box}</div>` : ""}</div>`)}
      ${ic(n.ic, "nic")}
      <div class="nm ${n.red ? "red" : ""} ${n.sel ? "sel" : ""}">${n.n}</div>
    </div>`;
  }

  render() {
    return html`
      <div class="titlebar">
        <div class="appic"></div>
        <div class="title">Autodesk Inventor 11 - НЕ ДЛЯ ПЕРЕПРОДАЖИ - [Гидроцилиндр.iam]</div>
        <div class="wb">_</div><div class="wb">❐</div><div class="wb close">✕</div>
      </div>
      <div class="menubar">
        ${ic("asm", "ic mlogo")}
        ${menu.map((m) => html`<span class="mitem">${m}</span>`)}
        <div class="vsep"></div>
        <div class="help">?</div>
        <div class="mgap"></div>
        ${ic("cp")}
        <span class="plus">+</span>
        <div class="mdi"><div class="mdib">_</div><div class="mdib">❐</div><div class="mdib">✕</div></div>
      </div>
      <div class="toolbar">
        ${tools.map((t) => this.renderTool(t))}
        <div class="combo">${ic("wheel", "wheel")}<span>В качестве материала</span><div class="combodd"><div class="tri"></div></div></div>
        <div class="sepl aftercombo"></div>
      </div>
      <div class="main">
        <div class="left">
          <div class="grip"><i></i><b>✕</b></div>
          <div class="phead">Изделие<span class="caret"></span><div class="help">?</div></div>
          <div class="cmds">${cmds.map((m) => this.renderCmd(m))}</div>
        </div>
        <div class="canvas"><svg viewBox="-12 -162 1218 1266" preserveAspectRatio="none">${model}</svg></div>
        <div class="right">
          <div class="grip"><i></i><b>✕</b></div>
          <div class="phead">CADCommunicator. Inventor.<span class="caret"></span><div class="help">?</div></div>
          <div class="rtb">
            <div class="dots"></div>
            ${rbtns.map((b) => html`<div class="rbtn" style="width:${b[1]}px">${ic("dn")}<span>${b[0]}</span></div>`)}
            <div class="tcs"><div class="ball"></div><span>TCS</span></div>
            <div class="chev"></div>
          </div>
          <div class="tabs">
            <div class="tab on">Активный документ</div>
            <div class="tab mid">Рабочая папка</div>
            <div class="tab">Настройки</div>
          </div>
          <div class="tree">
            <div class="tlist">${nodes.map((n) => this.renderNode(n))}</div>
            <div class="sb"><div class="sbb">˄</div><div class="thumb"></div><div class="grow"></div><div class="sbb">˅</div></div>
          </div>
          <div class="split"></div>
          <div class="tbl">
            <div class="tr head"><span>Параметр</span><span>Значение</span></div>
            ${params.map((q, i) => html`<div class="tr ${i === 0 ? "sel" : ""}"><span>${q[0]}</span><span>${q[1]}</span></div>`)}
          </div>
          <div class="note"></div>
        </div>
      </div>
      <div class="status">
        <div class="msg">Для вызова справки нажмите F1</div>
        <div class="cell">77</div><div class="cell">46</div>
        <div class="lg"></div><div class="lb"></div>
        ${ic("net", "ic net")}
      </div>
      <div class="taskbar"><div class="start"></div></div>
    `;
  }
}
